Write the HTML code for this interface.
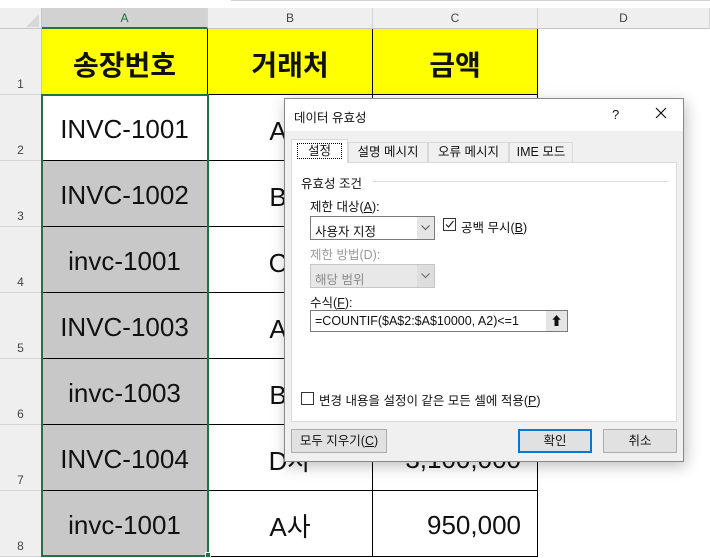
<!DOCTYPE html>
<html><head><meta charset="utf-8"><style>
*{box-sizing:border-box;margin:0;padding:0}
body{width:710px;height:557px;overflow:hidden;background:#fff;position:relative;font-family:"Liberation Sans","Noto Sans CJK KR",sans-serif}
.a{position:absolute}
.ch{position:absolute;top:8px;height:21px;background:#efefef;border-right:1px solid #d4d4d4;border-bottom:1px solid #c6c6c6;font-size:12px;color:#444;text-align:center;line-height:21px}
.rh{position:absolute;left:0;width:42px;background:#efefef;border-bottom:1px solid #d4d4d4;border-right:1px solid #c6c6c6;font-size:12px;color:#444;text-align:center}
.c{position:absolute;height:66px;border-right:1px solid #000;border-bottom:1px solid #000;font-size:26px;display:flex;align-items:center;justify-content:center;color:#111;padding-top:4px}
.d{font-family:"Liberation Sans","Noto Sans CJK KR",sans-serif;font-size:12.5px;color:#111}
.btn{position:absolute;height:24px;background:#e1e1e1;border:1px solid #adadad;text-align:center;line-height:22px;font-size:12.5px}
.dd{position:absolute;width:17px;height:22px;display:flex;align-items:center;justify-content:center}
</style></head><body>
<div class="a" style="left:0;top:0;width:710px;height:8px;background:#fff"></div>
<div class="a" style="left:231px;top:0;width:479px;height:1px;background:#d0d0d0"></div>
<div class="a" style="left:0;top:8px;width:42px;height:21px;background:#efefef;border-right:1px solid #c6c6c6;border-bottom:1px solid #c6c6c6"></div>
<div class="a" style="left:26px;top:14px;width:0;height:0;border-left:13px solid transparent;border-bottom:13px solid #d8d8d8"></div>
<div class="ch" style="left:42px;width:166px;background:#d2d2d2;color:#1e6e3e;border-bottom:2px solid #217346">A</div>
<div class="ch" style="left:208px;width:165px">B</div>
<div class="ch" style="left:373px;width:165px">C</div>
<div class="ch" style="left:538px;width:172px">D</div>

<div class="rh" style="top:29px;height:66px;padding-top:48px">1</div>
<div class="rh" style="top:95px;height:66px;padding-top:48px">2</div>
<div class="rh" style="top:161px;height:66px;padding-top:48px">3</div>
<div class="rh" style="top:227px;height:66px;padding-top:48px">4</div>
<div class="rh" style="top:293px;height:66px;padding-top:48px">5</div>
<div class="rh" style="top:359px;height:66px;padding-top:48px">6</div>
<div class="rh" style="top:425px;height:66px;padding-top:48px">7</div>
<div class="rh" style="top:491px;height:66px;padding-top:48px">8</div>

<div class="c" style="left:42px;top:29px;width:166px;background:#ff0;font-weight:bold;font-size:28px">송장번호</div>
<div class="c" style="left:208px;top:29px;width:165px;background:#ff0;font-weight:bold;font-size:28px">거래처</div>
<div class="c" style="left:373px;top:29px;width:165px;background:#ff0;font-weight:bold;font-size:28px">금액</div>

<div class="c" style="left:42px;top:95px;width:166px">INVC-1001</div>
<div class="c" style="left:42px;top:161px;width:166px;background:#c8c8c8">INVC-1002</div>
<div class="c" style="left:42px;top:227px;width:166px;background:#c8c8c8">invc-1001</div>
<div class="c" style="left:42px;top:293px;width:166px;background:#c8c8c8">INVC-1003</div>
<div class="c" style="left:42px;top:359px;width:166px;background:#c8c8c8">invc-1003</div>
<div class="c" style="left:42px;top:425px;width:166px;background:#c8c8c8">INVC-1004</div>
<div class="c" style="left:42px;top:491px;width:166px;background:#c8c8c8">invc-1001</div>

<div class="c" style="left:208px;top:95px;width:165px">A사</div>
<div class="c" style="left:208px;top:161px;width:165px">B사</div>
<div class="c" style="left:208px;top:227px;width:165px">C사</div>
<div class="c" style="left:208px;top:293px;width:165px">A사</div>
<div class="c" style="left:208px;top:359px;width:165px">B사</div>
<div class="c" style="left:208px;top:425px;width:165px">D사</div>
<div class="c" style="left:208px;top:491px;width:165px">A사</div>
<div class="c" style="left:373px;top:95px;width:165px"></div>
<div class="c" style="left:373px;top:425px;width:165px;justify-content:flex-end;padding-right:16px">3,100,000</div>
<div class="c" style="left:373px;top:491px;width:165px;justify-content:flex-end;padding-right:16px">950,000</div>
<div class="a" style="left:41px;top:94px;width:168px;height:463px;border:2px solid #217346"></div>
<div class="a" style="left:205px;top:552px;width:6px;height:6px;background:#217346;border:1px solid #fff"></div>

<div class="a d" style="left:284px;top:98px;width:400px;height:364px;background:#f0f0f0;border:1px solid #888;box-shadow:2px 4px 14px rgba(0,0,0,.25)">
 <div class="a" style="left:0;top:0;width:398px;height:32px;background:#fff"></div>
 <div class="a" style="left:9px;top:8px">데이터 유효성</div>
 <div class="a" style="left:327px;top:8px;font-size:13px">?</div>
 <svg class="a" style="left:370px;top:8px" width="12" height="12"><path d="M1 1L11 11M11 1L1 11" stroke="#111" stroke-width="1.2"/></svg>
 <div class="a" style="left:6px;top:63px;width:386px;height:260px;background:#fff;border:1px solid #d9d9d9"></div>
 <div class="a" style="left:6px;top:40px;width:57px;height:24px;background:#fff;border:1px solid #d9d9d9;border-bottom:none"></div>
 <div class="a" style="left:12px;top:44px;width:45px;height:16px;border:1px dotted #000;text-align:center;line-height:14px">설정</div>
 <div class="a" style="left:63px;top:43px;width:80px;height:21px;border:1px solid #d9d9d9;border-bottom:none;text-align:center;line-height:19px">설명 메시지</div>
 <div class="a" style="left:143px;top:43px;width:81px;height:21px;border:1px solid #d9d9d9;border-bottom:none;text-align:center;line-height:19px">오류 메시지</div>
 <div class="a" style="left:224px;top:43px;width:64px;height:21px;border:1px solid #d9d9d9;border-bottom:none;text-align:center;line-height:19px">IME 모드</div>
 <div class="a" style="left:16px;top:74px">유효성 조건</div>
 <div class="a" style="left:88px;top:82px;width:296px;height:1px;background:#ddd"></div>
 <div class="a" style="left:25px;top:97px">제한 대상(<u>A</u>):</div>
 <div class="a" style="left:25px;top:117px;width:125px;height:24px;border:1px solid #7a7a7a;background:#fff;padding:4px 4px">사용자 지정</div>
 <div class="dd" style="left:132px;top:118px;background:#e5e5e5"><svg width="9" height="6"><path d="M0.5 0.5L4.5 4.5L8.5 0.5" fill="none" stroke="#555"/></svg></div>
 <div class="a" style="left:158px;top:119px;width:13px;height:13px;border:1px solid #333;background:#fff"><svg width="11" height="11" style="display:block"><path d="M2 5.5L4.5 8L9.5 2" fill="none" stroke="#222" stroke-width="1.2"/></svg></div>
 <div class="a" style="left:176px;top:118px">공백 무시(<u>B</u>)</div>
 <div class="a" style="left:25px;top:145px;color:#9a9a9a">제한 방법(D):</div>
 <div class="a" style="left:25px;top:165px;width:125px;height:24px;border:1px solid #c5c5c5;background:#e8e8e8;color:#8a8a8a;padding:4px 4px">해당 범위</div>
 <div class="dd" style="left:132px;top:166px;background:#ddd"><svg width="9" height="6"><path d="M0.5 0.5L4.5 4.5L8.5 0.5" fill="none" stroke="#666"/></svg></div>
 <div class="a" style="left:25px;top:193px">수식(<u>F</u>):</div>
 <div class="a" style="left:25px;top:211px;width:258px;height:22px;border:1px solid #7a7a7a;background:#fff;padding:3px 4px">=COUNTIF($A$2:$A$10000, A2)&lt;=1</div>
 <div class="a" style="left:261px;top:212px;width:21px;height:20px;background:#e5e5e5;text-align:center;font-size:12px;font-weight:bold;line-height:20px">⬆</div>
 <div class="a" style="left:16px;top:293px;width:13px;height:13px;border:1px solid #333;background:#fff"></div>
 <div class="a" style="left:34px;top:291px">변경 내용을 설정이 같은 모든 셀에 적용(<u>P</u>)</div>
 <div class="btn" style="left:6px;top:330px;width:96px">모두 지우기(<u>C</u>)</div>
 <div class="btn" style="left:233px;top:330px;width:74px;border:2px solid #0078d7;line-height:20px">확인</div>
 <div class="btn" style="left:318px;top:330px;width:74px">취소</div>
</div>
</body></html>
